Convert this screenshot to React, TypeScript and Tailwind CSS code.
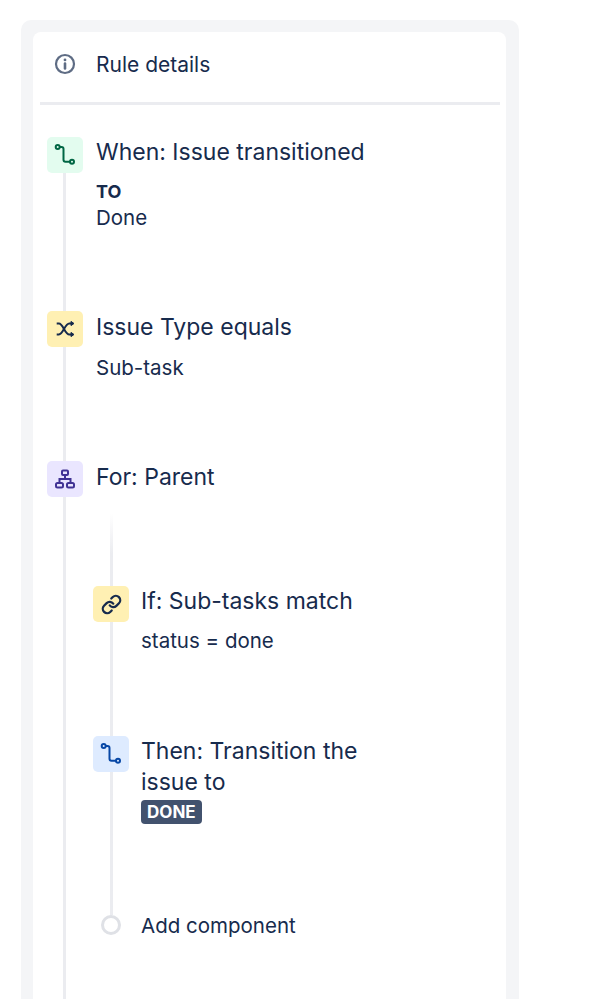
import type { ReactNode } from 'react';

function InfoIcon() {
  return (
    <svg width="24" height="24" viewBox="0 0 24 24" fill="none" stroke="#5e6c84" strokeWidth="2.2">
      <circle cx="12" cy="12" r="9" />
      <path d="M12 11.5v5" strokeWidth="2.6" strokeLinecap="round" />
      <circle cx="12" cy="7.9" r="1.4" fill="#5e6c84" stroke="none" />
    </svg>
  );
}

function BranchIcon({ color }: { color: string }) {
  return (
    <svg width="24" height="24" viewBox="0 0 24 24" fill="none" stroke={color} strokeWidth="2">
      <circle cx="4.7" cy="4" r="2" />
      <circle cx="19" cy="18.7" r="2" />
      <path d="M6.7 4h1.8a2 2 0 0 1 2 2v10.7a2 2 0 0 0 2 2h4.5" />
    </svg>
  );
}

function ShuffleIcon() {
  return (
    <svg width="24" height="24" viewBox="0 0 24 24" fill="none" stroke="#172b4d" strokeWidth="2">
      <path d="M3.7 6.5h2.2c4.2 0 6 11 10.4 11h3" />
      <path d="M3.7 17.5h2.2c4.2 0 6-11 10.4-11h3" />
      <path d="M18 4.4l3 2.1-3 2.1zM18 15.4l3 2.1-3 2.1z" fill="#172b4d" strokeWidth="1" />
    </svg>
  );
}

function TreeIcon() {
  return (
    <svg width="24" height="24" viewBox="0 0 24 24" fill="none" stroke="#403294" strokeWidth="2">
      <rect x="9" y="3.5" width="6" height="4.5" rx="1" />
      <rect x="3" y="16" width="7" height="4.5" rx="1.5" />
      <rect x="14" y="16" width="7" height="4.5" rx="1.5" />
      <path d="M12 8v4M6.5 16v-4h11v4" />
    </svg>
  );
}

function LinkIcon() {
  return (
    <svg width="21" height="21" viewBox="0 0 24 24" fill="none" stroke="#172b4d" strokeWidth="2.6" strokeLinecap="round">
      <path d="M10 13a5 5 0 0 0 7.54.54l3-3a5 5 0 0 0-7.07-7.07l-1.72 1.71" />
      <path d="M14 11a5 5 0 0 0-7.54-.54l-3 3a5 5 0 0 0 7.07 7.07l1.71-1.71" />
    </svg>
  );
}

function Tile({ bg, children }: { bg: string; children: ReactNode }) {
  return <div className={`relative z-10 flex h-9 w-9 shrink-0 items-center justify-center rounded-[5px] ${bg}`}>{children}</div>;
}

export default function App() {
  return (
    <div className="h-[999px] w-[608px] overflow-hidden bg-white pt-5 text-[#172b4d]" style={{ fontFamily: 'Inter, sans-serif' }}>
      <div className="ml-[21px] h-[979px] w-[498px] rounded-t-[10px] bg-[#f4f5f7] pl-3 pr-[13px] pt-3">
        <div className="h-full rounded-t-[8px] bg-white pl-[7px] pr-[6px]">
          <div className="flex h-[73px] items-center gap-[19px] border-b-[3px] border-[#ebecf0] pb-[6px] pl-[13px]">
            <InfoIcon />
            <span className="pt-px text-[21px]">Rule details</span>
          </div>

          <div className="relative pl-[7px] pt-[32px]">
            <div className="absolute left-[23px] top-[40px] h-[900px] w-[3px] bg-[#ebecf0]" />

            <div className="flex h-[174px] gap-[13px]">
              <Tile bg="bg-[#e3fcef]"><BranchIcon color="#006644" /></Tile>
              <div>
                <p className="text-[23px] leading-[30px]">When: Issue transitioned</p>
                <p className="mt-[13px] text-[18px] font-bold leading-[24px]">TO</p>
                <p className="text-[20.5px] leading-[27px]">Done</p>
              </div>
            </div>

            <div className="flex h-[150px] gap-[13px]">
              <Tile bg="bg-[#fff0b3]"><ShuffleIcon /></Tile>
              <div>
                <p className="text-[23px] leading-[32px]">Issue Type equals</p>
                <p className="mt-[11px] text-[20.5px] leading-[28px]">Sub-task</p>
              </div>
            </div>

            <div className="flex h-[125px] gap-[13px]">
              <Tile bg="bg-[#eae6ff]"><TreeIcon /></Tile>
              <p className="text-[23px] leading-[32px]">For: Parent</p>
            </div>

            <div className="relative pl-[46px]">
              <div className="absolute left-[63px] top-[-73px] h-[402px] w-[3px] bg-gradient-to-b from-transparent to-[#ebecf0] to-[10%]" />

              <div className="flex h-[150px] gap-[12px]">
                <Tile bg="bg-[#fff0b3]"><LinkIcon /></Tile>
                <div>
                  <p className="text-[23px] leading-[30px]">If: Sub-tasks match</p>
                  <p className="mt-[11px] text-[20.5px] leading-[28px]">status = done</p>
                </div>
              </div>

              <div className="flex h-[174px] gap-[12px]">
                <Tile bg="bg-[#deebff]"><BranchIcon color="#0747a6" /></Tile>
                <div>
                  <p className="w-[240px] text-[23px] leading-[31px]">Then: Transition the issue to</p>
                  <span className="mt-[2px] inline-block rounded-[4px] bg-[#42526e] px-[6px] text-[17px] font-bold leading-[24px] text-white">DONE</span>
                </div>
              </div>

              <div className="flex items-center gap-[20px] pl-[8px]">
                <div className="relative z-10 h-5 w-5 rounded-full border-[3px] border-[#dfe1e6] bg-white" />
                <span className="pt-[2px] text-[20.5px] leading-[28px]">Add component</span>
              </div>
            </div>
          </div>
        </div>
      </div>
    </div>
  );
}
